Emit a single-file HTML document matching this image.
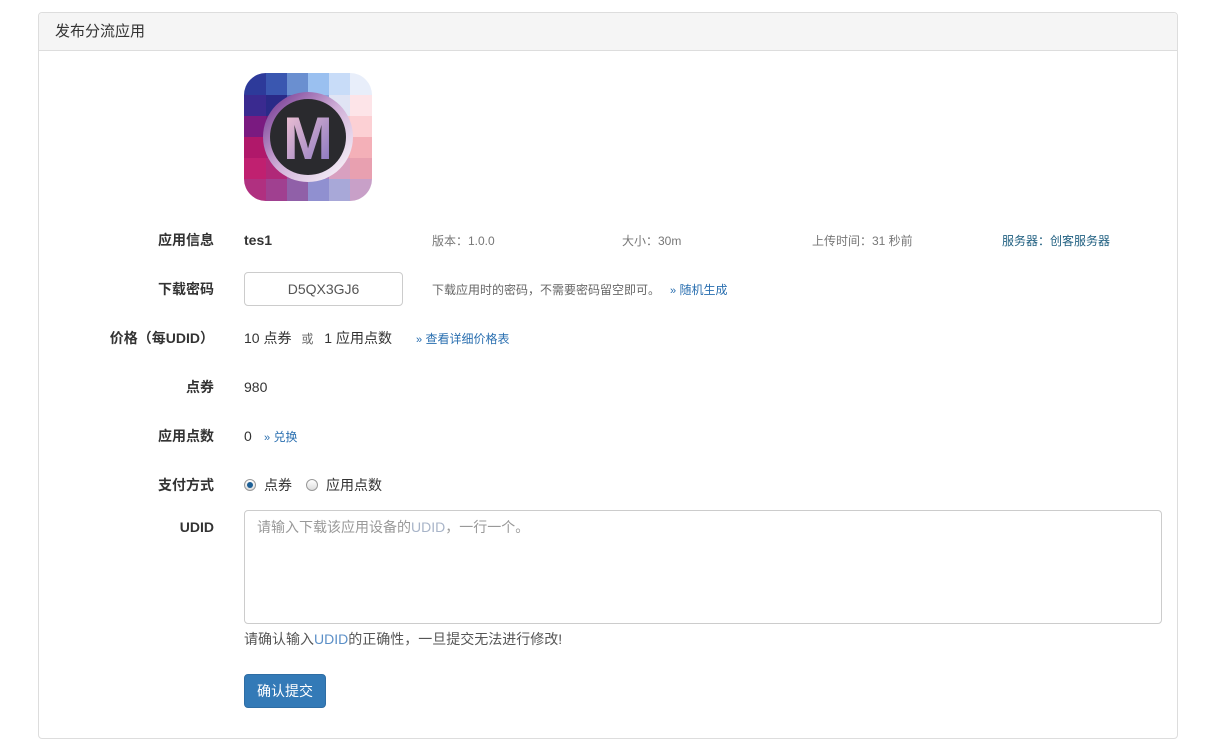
<!DOCTYPE html>
<html><head><meta charset="utf-8"><style>
*{margin:0;padding:0;box-sizing:border-box}
body{width:1210px;height:749px;background:#fff;font-family:"Liberation Sans","Noto Sans CJK SC",sans-serif;color:#333;font-size:14px;position:relative;overflow:hidden}
.panel{position:absolute;left:38px;top:12px;width:1140px;height:727px;border:1px solid #ddd;border-radius:4px}
.hd{height:38px;background:#f5f5f5;border-bottom:1px solid #ddd;padding-left:16px;line-height:37px;font-size:15px;color:#333;border-radius:4px 4px 0 0}
.a{position:absolute;white-space:nowrap;line-height:20px}
.lbl{position:absolute;right:996px;font-weight:bold;font-size:14px;line-height:20px;white-space:nowrap;color:#333}
.s{font-size:12px;color:#777}
.lk{color:#2a6fb0;font-size:12px}
.lk b{font-weight:normal;font-size:11px;color:#2a6fb0}
.radio{position:absolute;width:12px;height:12px;border-radius:50%;border:1px solid #999;background:linear-gradient(#fff,#ddd)}
.radio.on::after{content:"";position:absolute;left:2px;top:2px;width:6px;height:6px;border-radius:50%;background:#1d5f95}
</style></head><body>
<div class="panel"><div class="hd">发布分流应用</div></div>

<svg style="position:absolute;left:244px;top:73px" width="128" height="128" viewBox="0 0 128 128">
<defs>
<clipPath id="c"><rect width="128" height="128" rx="22"/></clipPath>
<linearGradient id="m" x1="0" y1="0" x2="1" y2="1"><stop offset="0" stop-color="#f8c8d4"/><stop offset="1" stop-color="#8070c0"/></linearGradient>
<linearGradient id="r" x1="0" y1="0" x2="1" y2="1"><stop offset="0" stop-color="#6a2a8a"/><stop offset="0.5" stop-color="#d0b0d8"/><stop offset="1" stop-color="#fff"/></linearGradient>
</defs>
<g clip-path="url(#c)">
<rect x="0" y="0" width="22" height="22" fill="#2d3a9a"/><rect x="22" y="0" width="21" height="22" fill="#3a57b0"/><rect x="43" y="0" width="21" height="22" fill="#6a8fd0"/><rect x="64" y="0" width="21" height="22" fill="#9ac0f0"/><rect x="85" y="0" width="21" height="22" fill="#c8dcf8"/><rect x="106" y="0" width="22" height="22" fill="#e8eefa"/>
<rect x="0" y="22" width="22" height="21" fill="#3a2a90"/><rect x="22" y="22" width="21" height="21" fill="#2a2a88"/><rect x="43" y="22" width="21" height="21" fill="#5060b0"/><rect x="64" y="22" width="21" height="21" fill="#8aa0d8"/><rect x="85" y="22" width="21" height="21" fill="#e0e4f4"/><rect x="106" y="22" width="22" height="21" fill="#fde4e8"/>
<rect x="0" y="43" width="22" height="21" fill="#7a1a80"/><rect x="22" y="43" width="21" height="21" fill="#6a1a7a"/><rect x="85" y="43" width="21" height="21" fill="#f8c8cc"/><rect x="106" y="43" width="22" height="21" fill="#fcd0d4"/>
<rect x="0" y="64" width="22" height="21" fill="#b0186a"/><rect x="22" y="64" width="21" height="21" fill="#a81a70"/><rect x="85" y="64" width="21" height="21" fill="#f0a8b0"/><rect x="106" y="64" width="22" height="21" fill="#f4b0b8"/>
<rect x="0" y="85" width="22" height="21" fill="#c02070"/><rect x="22" y="85" width="21" height="21" fill="#b02878"/><rect x="43" y="85" width="21" height="21" fill="#a050a0"/><rect x="64" y="85" width="21" height="21" fill="#b080c0"/><rect x="85" y="85" width="21" height="21" fill="#d8a0c0"/><rect x="106" y="85" width="22" height="21" fill="#e8a0b0"/>
<rect x="0" y="106" width="22" height="22" fill="#b03080"/><rect x="22" y="106" width="21" height="22" fill="#a04090"/><rect x="43" y="106" width="21" height="22" fill="#9060a8"/><rect x="64" y="106" width="21" height="22" fill="#9090d0"/><rect x="85" y="106" width="21" height="22" fill="#a8a8d8"/><rect x="106" y="106" width="22" height="22" fill="#c8a0c8"/>
</g>
<circle cx="64" cy="64" r="45" fill="url(#r)"/>
<circle cx="64" cy="64" r="38" fill="#2a2a2e"/>
<text x="64" y="86" text-anchor="middle" font-family="Liberation Sans" font-weight="bold" font-size="60" fill="url(#m)">M</text>
</svg>

<div class="lbl" style="top:230px">应用信息</div>
<div class="a" style="left:244px;top:230px;font-weight:bold">tes1</div>
<div class="a s" style="left:432px;top:231px">版本：1.0.0</div>
<div class="a s" style="left:622px;top:231px">大小：30m</div>
<div class="a s" style="left:812px;top:231px">上传时间：31 秒前</div>
<div class="a" style="left:1002px;top:231px;font-size:12px;color:#1f5f80">服务器：创客服务器</div>

<div class="lbl" style="top:279px">下载密码</div>
<div class="a" style="left:244px;top:272px;width:159px;height:34px;border:1px solid #ccc;border-radius:4px;text-align:center;line-height:32px;color:#555">D5QX3GJ6</div>
<div class="a s" style="left:432px;top:280px;color:#666">下载应用时的密码，不需要密码留空即可。</div>
<div class="a lk" style="left:670px;top:280px"><b>»</b> 随机生成</div>

<div class="lbl" style="top:328px">价格（每UDID）</div>
<div class="a" style="left:244px;top:328px">10 点券 <span style="font-size:12px;color:#666;margin:0 7px 0 6px">或</span> 1 应用点数</div>
<div class="a lk" style="left:416px;top:329px"><b>»</b> 查看详细价格表</div>

<div class="lbl" style="top:377px">点券</div>
<div class="a" style="left:244px;top:377px">980</div>

<div class="lbl" style="top:426px">应用点数</div>
<div class="a" style="left:244px;top:426px">0</div>
<div class="a lk" style="left:264px;top:427px"><b>»</b> 兑换</div>

<div class="lbl" style="top:475px">支付方式</div>
<span class="radio on" style="left:244px;top:479px"></span>
<div class="a" style="left:264px;top:475px">点券</div>
<span class="radio" style="left:306px;top:479px"></span>
<div class="a" style="left:326px;top:475px">应用点数</div>

<div class="lbl" style="top:517px">UDID</div>
<div class="a" style="left:244px;top:510px;width:918px;height:114px;border:1px solid #ccc;border-radius:4px;padding:6px 12px;color:#999">请输入下载该应用设备的<span style="color:#a8b4c8">UDID</span>，一行一个。</div>
<div class="a" style="left:244px;top:629px;color:#555">请确认输入<span style="color:#5b8fc7">UDID</span>的正确性，一旦提交无法进行修改!</div>

<div class="a" style="left:244px;top:674px;width:82px;height:34px;background:#337ab7;border:1px solid #2e6da4;border-radius:4px;color:#fff;text-align:center;line-height:32px">确认提交</div>
</body></html>
